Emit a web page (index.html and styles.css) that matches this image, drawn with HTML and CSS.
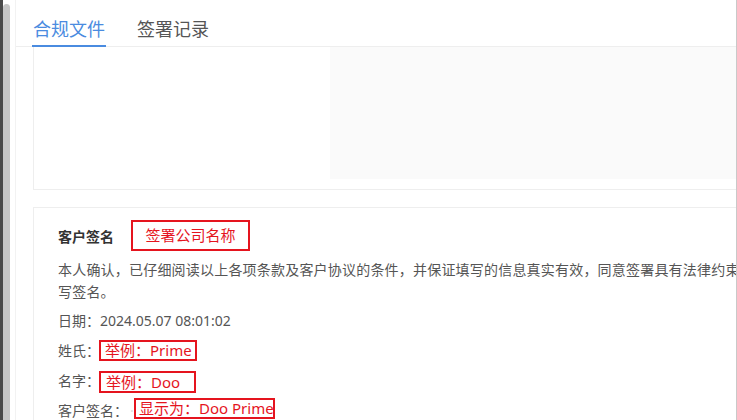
FILE: index.html
```html
<!DOCTYPE html>
<html lang="zh-CN">
<head>
<meta charset="utf-8">
<title>合规文件</title>
<link rel="stylesheet" href="styles.css">
</head>
<body>
<div class="frame">
  <div class="rail"></div>
  <div class="track"><div class="thumb"></div></div>
  <div class="gap"></div>
  <div class="main">
    <div class="tabs">
      <div class="tab active">合规文件</div>
      <div class="tab">签署记录</div>
    </div>
    <div class="content">
      <div class="card doc">
        <div class="doc-panel"></div>
      </div>
      <div class="card sign">
        <div class="sign-head">
          <span class="sign-title">客户签名</span>
          <span class="anno anno-title">签署公司名称</span>
        </div>
        <p class="sign-text">本人确认，已仔细阅读以上各项条款及客户协议的条件，并保证填写的信息真实有效，同意签署具有法律约束力的手写签名。</p>
        <div class="row"><span class="label">日期：</span><span class="value">2024.05.07 08:01:02</span></div>
        <div class="row"><span class="label">姓氏：</span><span class="anno anno-last">举例：Prime</span></div>
        <div class="row"><span class="label">名字：</span><span class="anno anno-first">举例：Doo</span></div>
        <div class="row"><span class="label">客户签名：</span><span class="mask">·</span><span class="anno anno-sign">显示为：Doo Prime</span></div>
      </div>
    </div>
  </div>
</div>
</body>
</html>
```
FILE: styles.css
```css
html, body {
  margin: 0;
  padding: 0;
  background: #ffffff;
}
body {
  width: 737px;
  height: 420px;
  overflow: hidden;
  font-family: "Noto Sans", "Noto Sans CJK SC", sans-serif;
  color: #555555;
}
.frame {
  display: flex;
  height: 420px;
}
.rail {
  width: 3px;
  background: #4a4a4a;
}
.track {
  width: 7px;
  padding-top: 4px;
  box-sizing: border-box;
  background: #ffffff;
}
.thumb {
  height: 100%;
  background: #c6c6c6;
  border-radius: 4px 4px 0 0;
}
.gap {
  width: 5px;
}
.main {
  flex: 1;
  min-width: 0;
  border-left: 1px solid #f2f2f2;
  border-right: 1px solid #c9c9c9;
  overflow: hidden;
}
.tabs {
  display: flex;
  padding-left: 16px;
  border-bottom: 1px solid #eeeeee;
}
.tab {
  padding: 16px 1px 5px;
  margin-bottom: -1px;
  font-size: 18px;
  line-height: 24px;
  color: #555555;
  border-bottom: 2px solid transparent;
  font-family: "Noto Sans CJK SC", sans-serif;
}
.tab + .tab {
  margin-left: 30px;
}
.tab.active {
  color: #4a8be0;
  border-bottom-color: #4a8be0;
}
.content {
  padding-left: 17px;
}
.card {
  width: 820px;
  border: 1px solid #eeeeee;
  background: #ffffff;
}
.doc {
  border-top: none;
  height: 142px;
  display: flex;
}
.doc-panel {
  margin-left: 296px;
  flex: 1;
  height: 132px;
  background: #fafafa;
}
.sign {
  margin-top: 17px;
  padding: 12px 24px 40px;
  box-sizing: border-box;
}
.sign-head {
  display: flex;
  align-items: center;
  height: 31px;
}
.sign-title {
  font-size: 14px;
  font-weight: bold;
  color: #333333;
  font-family: "Noto Sans CJK SC", sans-serif;
}
.anno {
  box-sizing: border-box;
  border: 2px solid #e5141e;
  color: #e5141e;
  font-size: 15px;
  white-space: nowrap;
}
.anno-title {
  margin-left: 17px;
  width: 119px;
  height: 31px;
  line-height: 27px;
  text-align: center;
}
.sign-text {
  margin: 8px 0 2px;
  width: 730px;
  font-size: 14px;
  line-height: 22px;
  letter-spacing: 0.2px;
  color: #555555;
}
.row {
  display: flex;
  align-items: center;
  height: 30px;
  font-size: 14px;
  color: #555555;
}
.label {
  font-family: "Noto Sans CJK SC", sans-serif;
}
.value {
  color: #555555;
}
.anno-last {
  margin-left: -1px;
  width: 98px;
  height: 21px;
  line-height: 17px;
  padding-left: 4px;
}
.anno-first {
  margin-left: -1px;
  width: 97px;
  height: 22px;
  line-height: 18px;
  padding-left: 5px;
  margin-top: 3px;
}
.mask {
  color: #dddddd;
  margin-left: 2px;
  width: 4px;
}
.anno-sign {
  margin-left: 0;
  width: 141px;
  height: 21px;
  line-height: 17px;
  padding-left: 3px;
  margin-top: -3px;
}
```
